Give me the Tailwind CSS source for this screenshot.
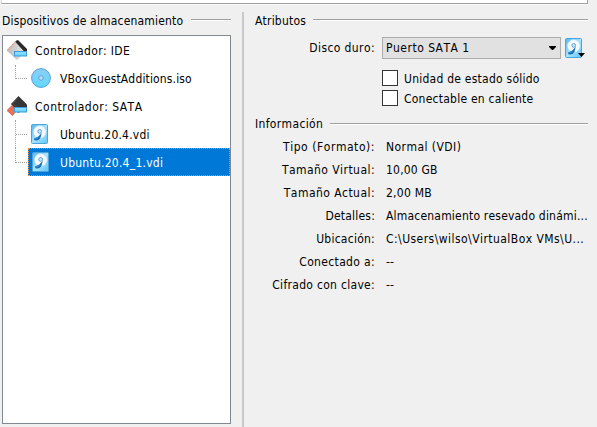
<!DOCTYPE html>
<html lang="es">
<head>
<meta charset="utf-8">
<title>Almacenamiento</title>
<script src="https://cdn.jsdelivr.net/npm/@tailwindcss/browser@4"></script>
</head>
<body class="w-[597px] h-[427px] overflow-hidden bg-[#f0f0f0] text-black font-['DejaVu_Sans_Condensed','DejaVu_Sans',sans-serif] [font-stretch:condensed] [font-kerning:none] tracking-[0.2px] text-[12px] leading-[16px] whitespace-nowrap">
<svg class="absolute w-0 h-0">
  <defs>
    <linearGradient id="blue" x1="0" y1="0" x2="1" y2="1"><stop offset="0" stop-color="#55b4ee"/><stop offset=".5" stop-color="#a5e5ff"/><stop offset="1" stop-color="#62c5f6"/></linearGradient>
    <linearGradient id="disc" x1="0" y1="0" x2="0" y2="1"><stop offset="0" stop-color="#8ccdf5"/><stop offset="1" stop-color="#62d9ff"/></linearGradient>
    <linearGradient id="chip" x1="0" y1="0" x2="1" y2="0"><stop offset="0" stop-color="#bdbdbd"/><stop offset="1" stop-color="#eeeae8"/></linearGradient>
    <linearGradient id="bar" x1="0" y1="0" x2="0" y2="1"><stop offset="0" stop-color="#9be7ff"/><stop offset="1" stop-color="#62ccfa"/></linearGradient>
    <symbol id="hdd" viewBox="0 0 17 20">
      <rect x=".5" y=".5" width="16" height="19" rx="1" fill="url(#blue)" stroke="#4da3dc"/>
      <circle cx="8.7" cy="8" r="6.4" fill="#f4faff" stroke="#a8d9f5" stroke-width=".6"/>
      <circle cx="8.7" cy="7.4" r="1.9" fill="#c5e8fa" stroke="#5a9fd6" stroke-width=".9"/>
      <path d="M10.8 8.8 9.4 14Q7.5 17.2 3.8 16.4L2.8 14.8 7.6 12.2Z" fill="#1c6dbb"/>
      <path d="M4.2 14.9 7.5 13.2" stroke="#5ba9e0" stroke-width=".7"/>
    </symbol>
  </defs>
</svg>
<div class="flex flex-col w-[597px] h-[427px]">
  <div class="ml-px w-[587px] h-[4px] shrink-0 bg-white border-b border-x border-[#a0a0a0] border-l-[#dcdcdc] shadow-[0_1px_0_#fafafa]"></div>
  <div class="flex flex-1 min-h-0">
    <section class="w-[242px] pl-[2px] pt-[8px]">
      <div class="flex items-center w-[229px] h-[16px]">
        <h2 class="w-[189px] mt-px tracking-[0.18px]">Dispositivos de almacenamiento</h2>
        <div class="flex-1 h-px bg-[#a0a0a0] mb-px shadow-[0_1px_0_white]"></div>
      </div>
      <div class="w-[229px] h-[389px] mt-[7px] bg-white border border-[#828790]">
        <div class="flex items-center h-[28px] pl-[4px]">
          <svg class="w-[20px] h-[20px]" viewBox="0 0 20 20">
            <path d="M10 .5 20 10 10 19.5 0 10.5Z" fill="url(#chip)" stroke="#b9b2af" stroke-width=".6"/>
            <path d="M9.2.8 0 10.5" stroke="#e77a58" stroke-width="1" stroke-dasharray="1.5 .7"/>
            <path d="M9.2.8 11 0 20 9v3h-2.5L8.5 2Z" fill="#292929"/>
            <rect x="7.5" y="11.5" width="12" height="4.5" fill="url(#bar)" stroke="#3a9cda"/>
          </svg>
          <span class="ml-[8px] pt-[2px] tracking-[0.38px]">Controlador: IDE</span>
        </div>
        <div class="flex items-center h-[28px] pl-[12px]">
          <div class="w-[12px] h-[14px] mb-[13px] border-l border-b border-dotted border-[#a0a0a0]"></div>
          <svg class="w-[20px] h-[20px] ml-[4px]" viewBox="0 0 20 20">
            <circle cx="10" cy="10" r="9.4" fill="url(#disc)" stroke="#549ed9"/>
            <circle cx="10" cy="10" r="2.2" fill="#dceffb" stroke="#549ed9"/>
            <circle cx="10" cy="10" r=".7" fill="#87bbe1"/>
          </svg>
          <span class="ml-[9px] pt-[2px] tracking-[0.15px]">VBoxGuestAdditions.iso</span>
        </div>
        <div class="flex items-center h-[28px] pl-[4px]">
          <svg class="w-[20px] h-[20px]" viewBox="0 0 20 20">
            <path d="M11.5 0 20 8.5V12L11 17 4 8Z" fill="#373737"/>
            <path d="M11.3 1 5.8 7.6 13 14" fill="none" stroke="#555" stroke-width=".8"/>
            <path d="M5 9.5 10 14 5.5 19.5 0 14.5Z" fill="#ed7150" stroke="#cf4f31" stroke-width=".7"/>
            <rect x="7.5" y="11.5" width="12" height="4.5" fill="url(#bar)" stroke="#3a9cda"/>
          </svg>
          <span class="ml-[8px] pt-[2px] tracking-[0.5px]">Controlador: SATA</span>
        </div>
        <div class="flex items-center h-[28px] pl-[12px]">
          <div class="w-[12px] h-[28px] border-l border-dotted border-[#a0a0a0]"><div class="h-[15px] border-b border-dotted border-[#a0a0a0]"></div></div>
          <svg class="w-[17px] h-[20px] ml-[4px]"><use href="#hdd"/></svg>
          <span class="ml-[12px] pt-[2px]">Ubuntu.20.4.vdi</span>
        </div>
        <div class="flex h-[28px] pl-[12px]">
          <div class="w-[12px] h-[15px] border-l border-b border-dotted border-[#a0a0a0]"></div>
          <div class="flex items-center flex-1 ml-px pl-[3px] bg-[#0078d7] border border-dotted border-[#ff8728] text-white">
            <svg class="w-[17px] h-[20px]"><use href="#hdd"/></svg>
            <span class="ml-[11px] pt-[2px] tracking-[0.25px]">Ubuntu.20.4_1.vdi</span>
          </div>
        </div>
      </div>
    </section>
    <div class="w-[2px] mt-[8px] bg-[#c8c8c8]"></div>
    <section class="w-[345px] pl-[11px] pr-px pt-[8px]">
      <div class="flex items-center h-[16px]">
        <h2 class="w-[58px] mt-px">Atributos</h2>
        <div class="flex-1 h-px bg-[#a0a0a0] mb-px shadow-[0_1px_0_white]"></div>
      </div>
      <div class="flex items-center h-[22px] mt-[9px]">
        <span class="w-[120px] text-right tracking-[0.4px]">Disco duro:</span>
        <div class="flex items-center justify-between w-[179px] h-[22px] ml-[7px] pl-[3px] pr-[4px] bg-[#e1e1e1] border border-[#adadad]">
          <span class="tracking-[0.5px]">Puerto SATA 1</span>
          <svg class="w-[7px] h-[4px]" viewBox="0 0 7 4"><path d="M0 0H7V1L4 4H3L0 1Z"/></svg>
        </div>
        <div class="relative w-[17px] h-[20px] ml-[4px]">
          <svg class="w-[17px] h-[20px]"><use href="#hdd"/></svg>
          <svg class="absolute left-[13px] top-[15px] w-[7px] h-[4px]" viewBox="0 0 7 4"><path d="M0 0H7L3.5 4Z"/></svg>
        </div>
      </div>
      <div class="flex flex-col gap-[4px] pl-[127px] mt-[11px]">
        <div class="flex items-center h-[16px] gap-[6px]"><i class="w-[16px] h-[16px] border border-[#333] bg-white"></i><span class="mt-px tracking-[0.24px]">Unidad de estado sólido</span></div>
        <div class="flex items-center h-[16px] gap-[6px]"><i class="w-[16px] h-[16px] border border-[#333] bg-white"></i><span class="mt-px tracking-[0.24px]">Conectable en caliente</span></div>
      </div>
      <div class="flex items-center h-[16px] mt-[10px]">
        <h2 class="w-[75px] tracking-[0.35px]">Información</h2>
        <div class="flex-1 h-px bg-[#a0a0a0] mb-[2px] shadow-[0_1px_0_white]"></div>
      </div>
      <dl class="grid grid-cols-[120px_1fr] auto-rows-[23px] gap-x-[11px] mt-[3px] items-center">
        <dt class="text-right tracking-[0.55px]">Tipo (Formato):</dt><dd class="tracking-[0.45px]">Normal (VDI)</dd>
        <dt class="text-right tracking-[0.45px]">Tamaño Virtual:</dt><dd>10,00 GB</dd>
        <dt class="text-right tracking-[0.45px]">Tamaño Actual:</dt><dd class="tracking-[0.25px]">2,00 MB</dd>
        <dt class="text-right">Detalles:</dt><dd>Almacenamiento resevado dinámi...</dd>
        <dt class="text-right tracking-[0.25px]">Ubicación:</dt><dd class="tracking-[0.45px]">C:\Users\wilso\VirtualBox VMs\U...</dd>
        <dt class="text-right tracking-[0.35px]">Conectado a:</dt><dd>--</dd>
        <dt class="text-right tracking-[0.3px]">Cifrado con clave:</dt><dd>--</dd>
      </dl>
    </section>
  </div>
</div>
</body>
</html>
